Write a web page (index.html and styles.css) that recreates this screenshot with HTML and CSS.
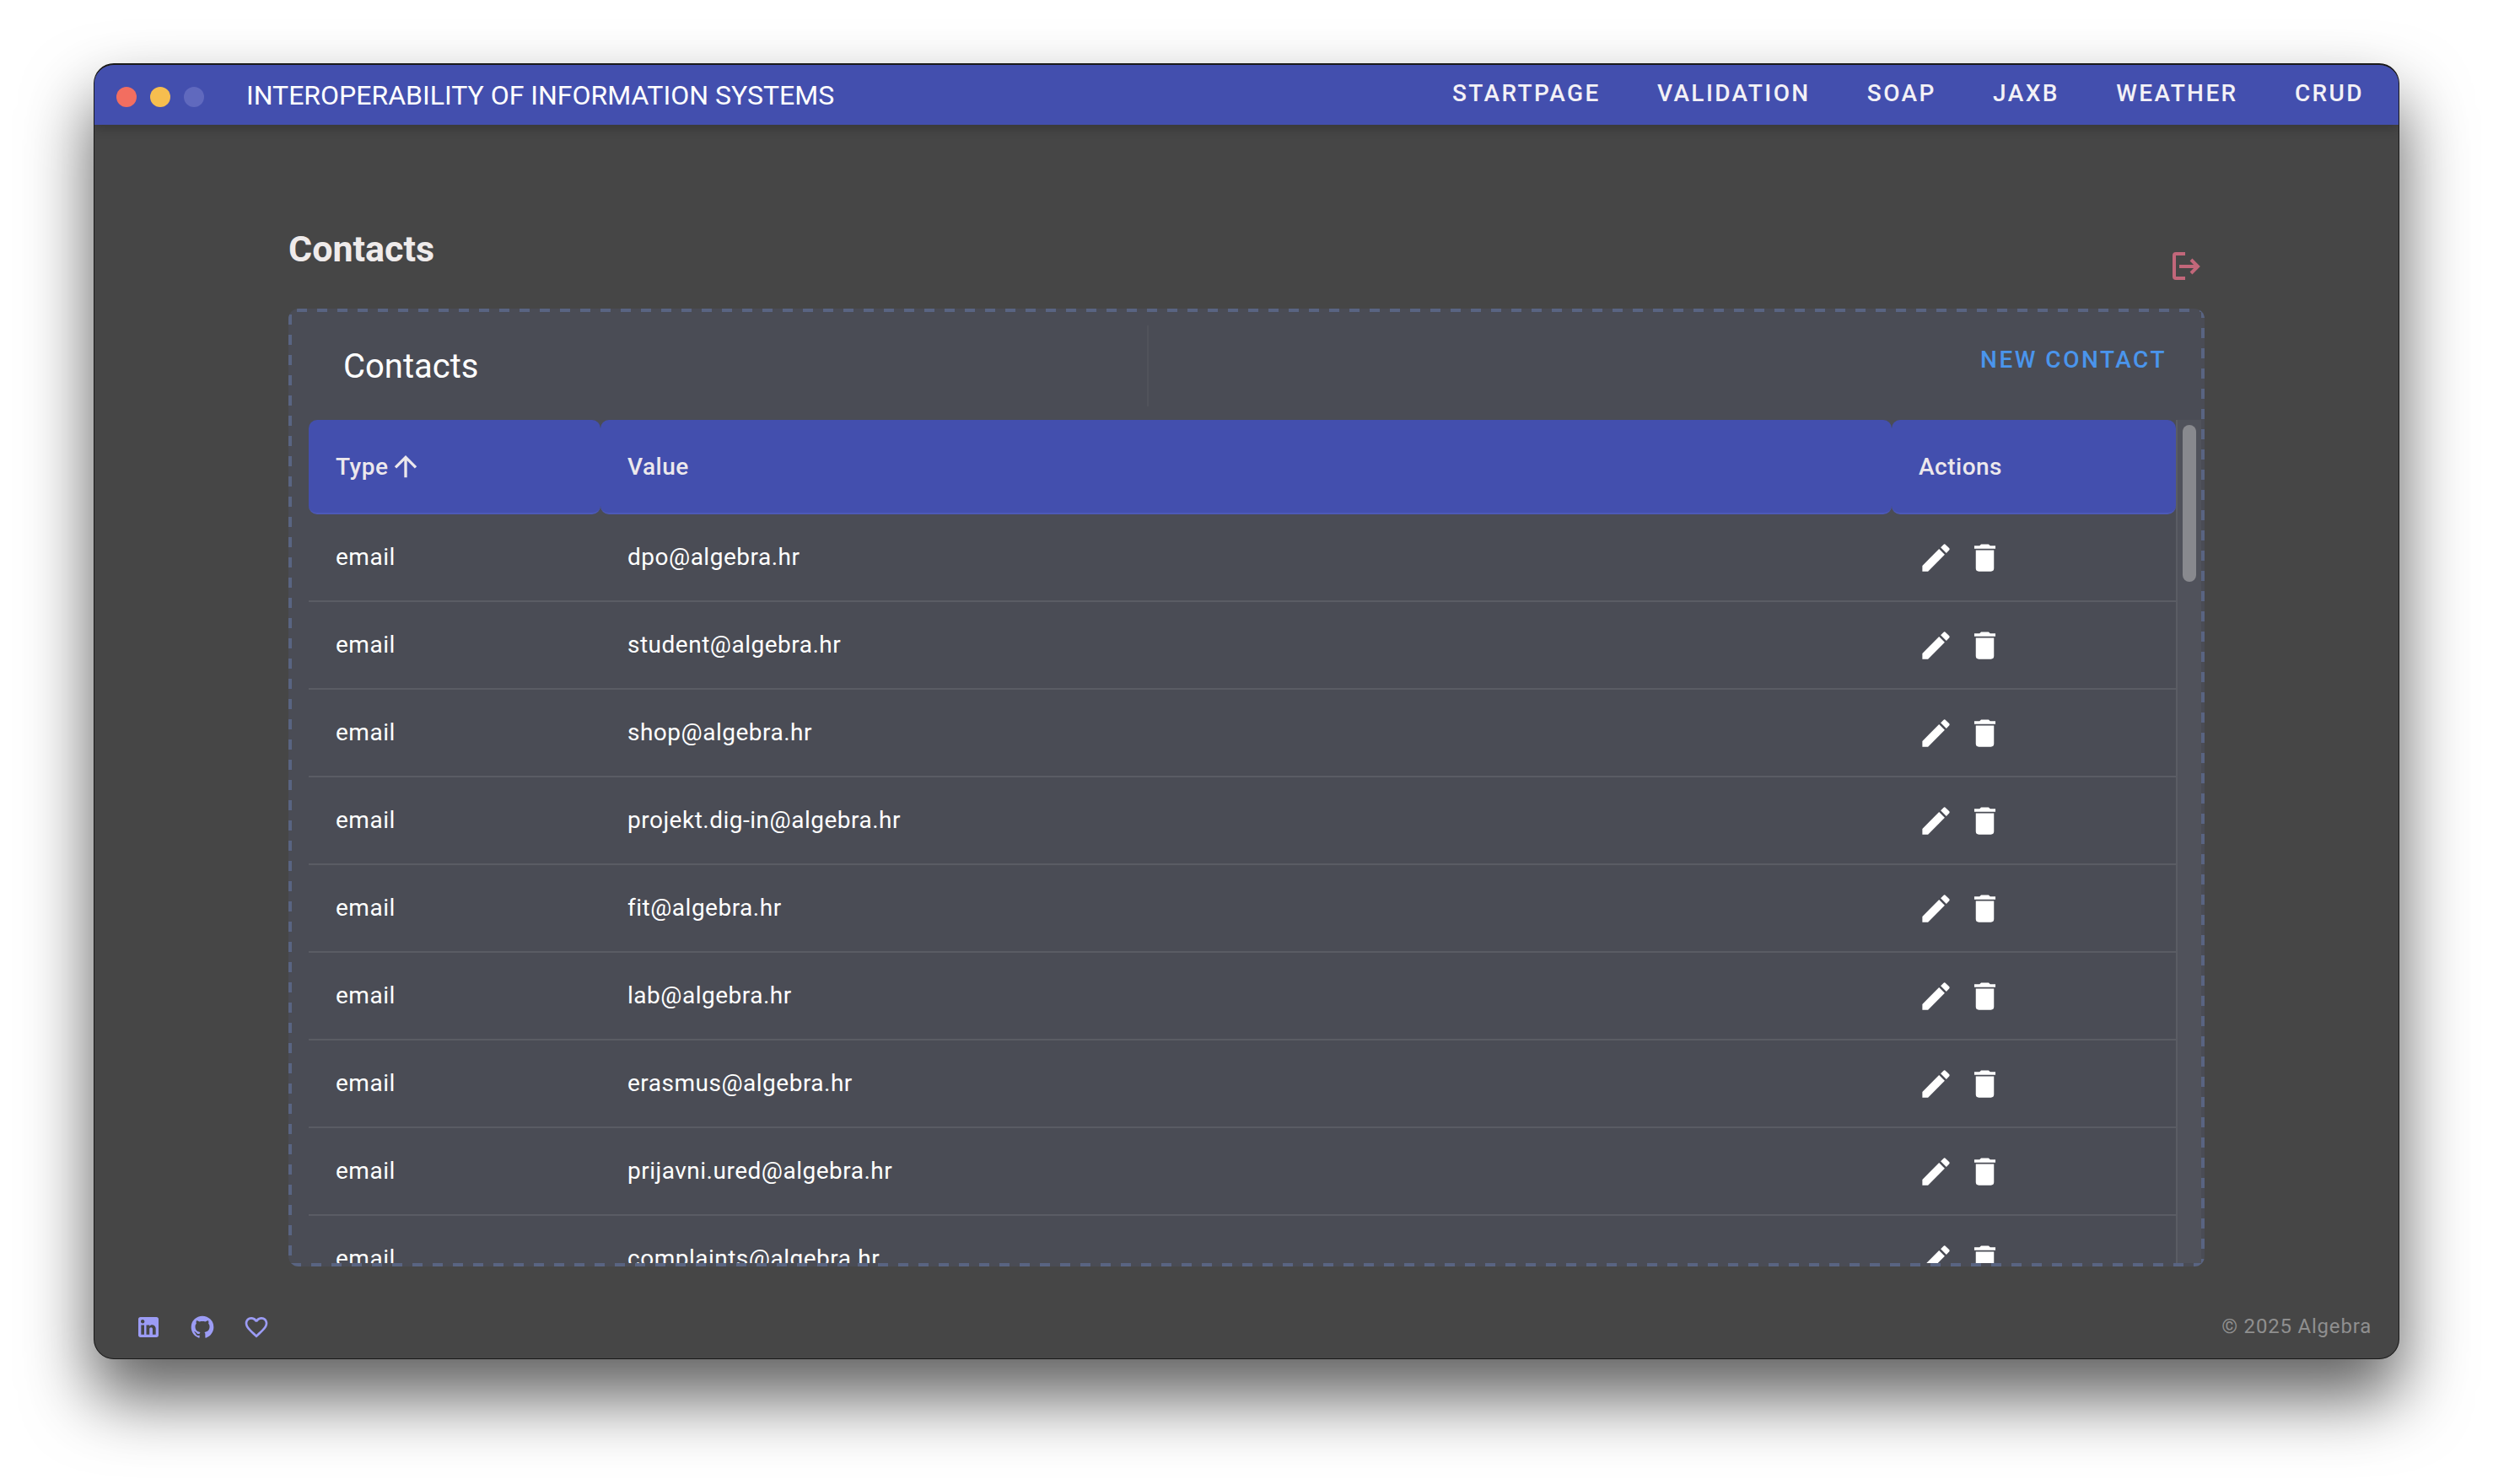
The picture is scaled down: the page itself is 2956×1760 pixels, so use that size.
FILE: index.html
```html
<!DOCTYPE html>
<html lang="en">
<head>
<meta charset="utf-8">
<title>Contacts</title>
<link rel="stylesheet" href="styles.css">
</head>
<body>
<div class="window">
  <header class="topbar">
    <div class="dots"><span class="dot dot-red"></span><span class="dot dot-yellow"></span><span class="dot dot-blue"></span></div>
    <div class="app-title">INTEROPERABILITY OF INFORMATION SYSTEMS</div>
    <nav class="nav">
      <a class="nav-item">STARTPAGE</a>
      <a class="nav-item">VALIDATION</a>
      <a class="nav-item">SOAP</a>
      <a class="nav-item">JAXB</a>
      <a class="nav-item">WEATHER</a>
      <a class="nav-item">CRUD</a>
    </nav>
  </header>
  <main class="main">
    <div class="page-head">
      <h1 class="page-title">Contacts</h1>
      <svg class="logout" viewBox="0 0 40 40" fill="none" stroke="#c2677a" stroke-width="4"><path d="M20 7H9a2 2 0 0 0-2 2V34a2 2 0 0 0 2 2H20" transform="translate(0 -2)"/><path d="M13 20H35M27 12l8 8-8 8"/></svg>
    </div>
    <section class="card">
      <div class="card-head">
        <div class="card-title-wrap"><h2 class="card-title">Contacts</h2></div>
        <a class="new-btn">NEW CONTACT</a>
      </div>
      <div class="table-wrap">
        <div class="table-clip">
          <table class="table">
            <colgroup><col class="col-type"><col class="col-value"><col class="col-actions"></colgroup>
            <thead>
              <tr>
                <th><span class="th-inner">Type <svg class="sort" viewBox="0 0 24 24"><path d="M13,20H11V8L5.5,13.5L4.08,12.08L12,4.16L19.92,12.08L18.5,13.5L13,8V20Z"/></svg></span></th>
                <th>Value</th>
                <th>Actions</th>
              </tr>
            </thead>
            <tbody>
              <tr><td>email</td><td>dpo@algebra.hr</td><td><div class="acts"><svg class="act" viewBox="0 0 24 24"><path d="M20.71,7.04C21.1,6.65 21.1,6 20.71,5.63L18.37,3.29C18,2.9 17.35,2.9 16.96,3.29L15.12,5.12L18.87,8.87M3,17.25V21H6.75L17.81,9.93L14.06,6.18L3,17.25Z"/></svg><svg class="act" viewBox="0 0 24 24"><path d="M19,4H15.5L14.5,3H9.5L8.5,4H5V6H19M6,19A2,2 0 0,0 8,21H16A2,2 0 0,0 18,19V7H6V19Z"/></svg></div></td></tr>
              <tr><td>email</td><td>student@algebra.hr</td><td><div class="acts"><svg class="act" viewBox="0 0 24 24"><path d="M20.71,7.04C21.1,6.65 21.1,6 20.71,5.63L18.37,3.29C18,2.9 17.35,2.9 16.96,3.29L15.12,5.12L18.87,8.87M3,17.25V21H6.75L17.81,9.93L14.06,6.18L3,17.25Z"/></svg><svg class="act" viewBox="0 0 24 24"><path d="M19,4H15.5L14.5,3H9.5L8.5,4H5V6H19M6,19A2,2 0 0,0 8,21H16A2,2 0 0,0 18,19V7H6V19Z"/></svg></div></td></tr>
              <tr><td>email</td><td>shop@algebra.hr</td><td><div class="acts"><svg class="act" viewBox="0 0 24 24"><path d="M20.71,7.04C21.1,6.65 21.1,6 20.71,5.63L18.37,3.29C18,2.9 17.35,2.9 16.96,3.29L15.12,5.12L18.87,8.87M3,17.25V21H6.75L17.81,9.93L14.06,6.18L3,17.25Z"/></svg><svg class="act" viewBox="0 0 24 24"><path d="M19,4H15.5L14.5,3H9.5L8.5,4H5V6H19M6,19A2,2 0 0,0 8,21H16A2,2 0 0,0 18,19V7H6V19Z"/></svg></div></td></tr>
              <tr><td>email</td><td>projekt.dig-in@algebra.hr</td><td><div class="acts"><svg class="act" viewBox="0 0 24 24"><path d="M20.71,7.04C21.1,6.65 21.1,6 20.71,5.63L18.37,3.29C18,2.9 17.35,2.9 16.96,3.29L15.12,5.12L18.87,8.87M3,17.25V21H6.75L17.81,9.93L14.06,6.18L3,17.25Z"/></svg><svg class="act" viewBox="0 0 24 24"><path d="M19,4H15.5L14.5,3H9.5L8.5,4H5V6H19M6,19A2,2 0 0,0 8,21H16A2,2 0 0,0 18,19V7H6V19Z"/></svg></div></td></tr>
              <tr><td>email</td><td>fit@algebra.hr</td><td><div class="acts"><svg class="act" viewBox="0 0 24 24"><path d="M20.71,7.04C21.1,6.65 21.1,6 20.71,5.63L18.37,3.29C18,2.9 17.35,2.9 16.96,3.29L15.12,5.12L18.87,8.87M3,17.25V21H6.75L17.81,9.93L14.06,6.18L3,17.25Z"/></svg><svg class="act" viewBox="0 0 24 24"><path d="M19,4H15.5L14.5,3H9.5L8.5,4H5V6H19M6,19A2,2 0 0,0 8,21H16A2,2 0 0,0 18,19V7H6V19Z"/></svg></div></td></tr>
              <tr><td>email</td><td>lab@algebra.hr</td><td><div class="acts"><svg class="act" viewBox="0 0 24 24"><path d="M20.71,7.04C21.1,6.65 21.1,6 20.71,5.63L18.37,3.29C18,2.9 17.35,2.9 16.96,3.29L15.12,5.12L18.87,8.87M3,17.25V21H6.75L17.81,9.93L14.06,6.18L3,17.25Z"/></svg><svg class="act" viewBox="0 0 24 24"><path d="M19,4H15.5L14.5,3H9.5L8.5,4H5V6H19M6,19A2,2 0 0,0 8,21H16A2,2 0 0,0 18,19V7H6V19Z"/></svg></div></td></tr>
              <tr><td>email</td><td>erasmus@algebra.hr</td><td><div class="acts"><svg class="act" viewBox="0 0 24 24"><path d="M20.71,7.04C21.1,6.65 21.1,6 20.71,5.63L18.37,3.29C18,2.9 17.35,2.9 16.96,3.29L15.12,5.12L18.87,8.87M3,17.25V21H6.75L17.81,9.93L14.06,6.18L3,17.25Z"/></svg><svg class="act" viewBox="0 0 24 24"><path d="M19,4H15.5L14.5,3H9.5L8.5,4H5V6H19M6,19A2,2 0 0,0 8,21H16A2,2 0 0,0 18,19V7H6V19Z"/></svg></div></td></tr>
              <tr><td>email</td><td>prijavni.ured@algebra.hr</td><td><div class="acts"><svg class="act" viewBox="0 0 24 24"><path d="M20.71,7.04C21.1,6.65 21.1,6 20.71,5.63L18.37,3.29C18,2.9 17.35,2.9 16.96,3.29L15.12,5.12L18.87,8.87M3,17.25V21H6.75L17.81,9.93L14.06,6.18L3,17.25Z"/></svg><svg class="act" viewBox="0 0 24 24"><path d="M19,4H15.5L14.5,3H9.5L8.5,4H5V6H19M6,19A2,2 0 0,0 8,21H16A2,2 0 0,0 18,19V7H6V19Z"/></svg></div></td></tr>
              <tr><td>email</td><td>complaints@algebra.hr</td><td><div class="acts"><svg class="act" viewBox="0 0 24 24"><path d="M20.71,7.04C21.1,6.65 21.1,6 20.71,5.63L18.37,3.29C18,2.9 17.35,2.9 16.96,3.29L15.12,5.12L18.87,8.87M3,17.25V21H6.75L17.81,9.93L14.06,6.18L3,17.25Z"/></svg><svg class="act" viewBox="0 0 24 24"><path d="M19,4H15.5L14.5,3H9.5L8.5,4H5V6H19M6,19A2,2 0 0,0 8,21H16A2,2 0 0,0 18,19V7H6V19Z"/></svg></div></td></tr>
            </tbody>
          </table>
        </div>
        <div class="track"><div class="thumb"></div></div>
      </div>
    </section>
  </main>
  <footer class="footer">
    <div class="socials">
      <svg class="social" viewBox="0 0 24 24"><path d="M19 3A2 2 0 0 1 21 5V19A2 2 0 0 1 19 21H5A2 2 0 0 1 3 19V5A2 2 0 0 1 5 3H19M18.5 18.5V13.2A3.26 3.26 0 0 0 15.24 9.94C14.39 9.94 13.4 10.46 12.92 11.24V10.13H10.13V18.5H12.92V13.57C12.92 12.8 13.54 12.17 14.31 12.17A1.4 1.4 0 0 1 15.71 13.57V18.5H18.5M6.88 8.56A1.68 1.68 0 0 0 8.56 6.88C8.56 5.95 7.81 5.19 6.88 5.19A1.69 1.69 0 0 0 5.19 6.88C5.19 7.81 5.95 8.56 6.88 8.56M8.27 18.5V10.13H5.5V18.5H8.27Z"/></svg>
      <svg class="social" viewBox="0 0 24 24"><path d="M12,2A10,10 0 0,0 2,12C2,16.42 4.87,20.17 8.84,21.5C9.34,21.58 9.5,21.27 9.5,21C9.5,20.77 9.5,20.14 9.5,19.31C6.73,19.91 6.14,17.97 6.14,17.97C5.68,16.81 5.03,16.5 5.03,16.5C4.12,15.88 5.1,15.9 5.1,15.9C6.1,15.97 6.63,16.93 6.63,16.93C7.5,18.45 8.97,18 9.54,17.76C9.63,17.11 9.89,16.67 10.17,16.42C7.95,16.17 5.62,15.31 5.62,11.5C5.62,10.39 6,9.5 6.65,8.79C6.55,8.54 6.2,7.5 6.75,6.15C6.75,6.15 7.59,5.88 9.5,7.17C10.29,6.95 11.15,6.84 12,6.84C12.85,6.84 13.71,6.95 14.5,7.17C16.41,5.88 17.25,6.15 17.25,6.15C17.8,7.5 17.45,8.54 17.35,8.79C18,9.5 18.38,10.39 18.38,11.5C18.38,15.32 16.04,16.16 13.81,16.41C14.17,16.72 14.5,17.33 14.5,18.26C14.5,19.6 14.5,20.68 14.5,21C14.5,21.27 14.66,21.59 15.17,21.5C19.14,20.16 22,16.42 22,12A10,10 0 0,0 12,2Z"/></svg>
      <svg class="social" viewBox="0 0 24 24"><path d="M12.1,18.55L12,18.65L11.89,18.55C7.14,14.24 4,11.39 4,8.5C4,6.5 5.5,5 7.5,5C9.04,5 10.54,6 11.07,7.36H12.93C13.46,6 14.96,5 16.5,5C18.5,5 20,6.5 20,8.5C20,11.39 16.86,14.24 12.1,18.55M16.5,3C14.76,3 13.09,3.81 12,5.08C10.91,3.81 9.24,3 7.5,3C4.42,3 2,5.41 2,8.5C2,12.27 5.4,15.36 10.55,20.03L12,21.35L13.45,20.03C18.6,15.36 22,12.27 22,8.5C22,5.41 19.58,3 16.5,3Z"/></svg>
    </div>
    <div class="copyright">© 2025 Algebra</div>
  </footer>
</div>
</body>
</html>
```

FILE: styles.css
```css
* { box-sizing: border-box; }
html, body { margin: 0; height: 100%; }
body {
  background: #fff;
  padding: 75px 111px 148px 111px;
  font-family: Roboto, "Liberation Sans", sans-serif;
  overflow: hidden;
}
.window {
  width: 2734px;
  height: 1537px;
  border: 1px solid #1a1a1a;
  border-top-width: 2px;
  border-radius: 24px;
  background: #464646;
  display: flex;
  flex-direction: column;
  box-shadow: 0 44px 80px 2px rgba(0,0,0,.62);
  overflow: hidden;
}
.topbar {
  height: 71px;
  flex: none;
  background: #434fae;
  display: flex;
  align-items: center;
  padding: 0 41px 0 26px;
  color: #fff;
  box-shadow: 0 4px 12px rgba(0,0,0,.22);
  position: relative;
}
.dots { display: flex; gap: 16px; margin-right: 50px; padding-top: 4px; }
.dot { width: 24px; height: 24px; border-radius: 50%; }
.dot-red { background: #f26e60; }
.dot-yellow { background: #f6be4f; }
.dot-blue { background: #6069be; }
.app-title { font-size: 32px; letter-spacing: 0; flex: 1; padding-top: 1px; }
.nav { display: flex; gap: 67.25px; padding-bottom: 4px; }
.nav-item { font-size: 28px; font-weight: 500; letter-spacing: 2.4px; color: #f3f1f6; }
.main {
  flex: none;
  padding: 0 230px;
  display: flex;
  flex-direction: column;
}
.page-head {
  height: 218px;
  flex: none;
  display: flex;
  justify-content: space-between;
  align-items: flex-end;
}
.page-title {
  margin: 0 0 41px;
  font-size: 43px;
  line-height: 60px;
  font-weight: 700;
  color: #efebeb;
}
.logout { width: 40px; height: 40px; margin: 0 3px 30px 0; }
.card {
  height: 1136px;
  flex: none;
  padding: 4px;
  background-color: #4a4c55;
  background-image:
    linear-gradient(90deg, #596482 50%, transparent 50%),
    linear-gradient(90deg, #596482 50%, transparent 50%),
    linear-gradient(180deg, #596482 50%, transparent 50%),
    linear-gradient(180deg, #596482 50%, transparent 50%);
  background-size: 24px 4px, 24px 4px, 4px 24px, 4px 24px;
  background-repeat: repeat-x, repeat-x, repeat-y, repeat-y;
  background-position: 10px 0, 3px 100%, 0 7px, 100% 23px;
  border-radius: 12px;
  display: flex;
  flex-direction: column;
  overflow: hidden;
}
.card-head {
  height: 128px;
  flex: none;
  display: flex;
  justify-content: space-between;
  padding: 16px 41px 0 0;
}
.card-title-wrap {
  width: 1016px;
  height: 96px;
  padding-left: 61px;
  border-right: 2px solid rgba(255,255,255,.04);
}
.card-title {
  margin: 0;
  font-size: 40px;
  font-weight: 400;
  line-height: 98px;
  color: #fff;
}
.new-btn {
  font-size: 28px;
  font-weight: 500;
  letter-spacing: 2.5px;
  color: #4a95ec;
  line-height: 82px;
}
.table-wrap {
  flex: 1;
  min-height: 0;
  display: flex;
  padding-left: 20px;
}
.table-clip { width: 2214px; overflow: hidden; }
.table {
  width: 2214px;
  table-layout: fixed;
  border-collapse: separate;
  border-spacing: 0;
  font-size: 28px;
  letter-spacing: .5px;
  color: #fff;
}
.col-type { width: 346px; }
.col-value { width: 1531px; }
.col-actions { width: 337px; }
th {
  height: 112px;
  padding: 0 32px;
  text-align: left;
  font-weight: 500;
  color: #ece8ec;
  background: #434fae;
  border-bottom: 2px solid #4d5ab8;
  border-radius: 10px;
}
.th-inner { display: inline-flex; align-items: center; gap: 4px; }
.sort { width: 40px; height: 40px; fill: #ece8ec; margin-left: -3px; }
td {
  height: 104px;
  padding: 0 32px 2px;
  border-bottom: 2px solid #5a5c64;
}
.acts { display: flex; gap: 15px; margin: 2px 0 0 -1px; }
.act { width: 43px; height: 43px; fill: #fff; display: block; }
.track {
  width: 30px;
  flex: none;
  background: #50525b;
  border-left: 2px solid #5a5c64;
  padding: 6px 5px 0 6px;
}
.thumb { width: 16px; height: 186px; border-radius: 8px; background: #88898e; }
.footer {
  flex: 1;
  min-height: 0;
  display: flex;
  justify-content: space-between;
  align-items: center;
  padding: 0 32px 0 48px;
}
.socials { display: flex; gap: 32px; padding-top: 35px; }
.social { width: 32px; height: 32px; fill: #9c9cf5; display: block; }
.copyright { font-size: 24px; letter-spacing: .8px; color: #8f8f8f; padding-top: 32px; }
```
